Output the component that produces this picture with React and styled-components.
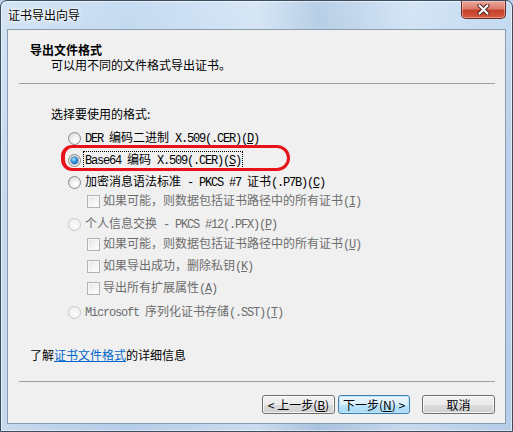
import React from 'react';
import styled, { createGlobalStyle } from 'styled-components';

const GlobalStyle = createGlobalStyle`
  html, body {
    margin: 0;
    padding: 0;
    background: #b9d1ea;
  }
  body {
    font-family: "Noto Sans CJK SC", "Liberation Sans", sans-serif;
    font-size: 12px;
    color: #000;
  }
`;

const Window = styled.div`
  width: 513px;
  height: 432px;
  box-sizing: border-box;
  display: flex;
  flex-direction: column;
  border: 1px solid #3d4d60;
  border-radius: 7px 7px 0 0;
  overflow: hidden;
  background:
    linear-gradient(90deg, rgba(255, 255, 255, 0.25) 0%, rgba(255, 255, 255, 0) 25%, rgba(255, 255, 255, 0.3) 50%, rgba(90, 120, 150, 0.12) 62%, rgba(255, 255, 255, 0.25) 80%, rgba(255, 255, 255, 0) 100%),
    linear-gradient(#c6dcf2, #b7cfe9 40%, #b4cde8);
  box-shadow: inset 0 0 0 1px rgba(255, 255, 255, 0.55);
`;

const TitleBar = styled.div`
  height: 28px;
  flex: none;
  display: flex;
  justify-content: space-between;
  align-items: flex-start;
  padding-left: 7px;
`;

const Title = styled.span`
  margin-top: 6px;
  line-height: 16px;
  text-shadow: 0 0 6px #fff, 0 0 3px #fff, 0 0 2px #fff;
`;

const CloseButton = styled.div`
  width: 45px;
  height: 18px;
  box-sizing: border-box;
  margin-right: 6px;
  display: flex;
  align-items: center;
  justify-content: center;
  border: 1px solid #6b2a22;
  border-top: none;
  border-radius: 0 0 5px 5px;
  background: linear-gradient(#e8a89d 0%, #dc7b6c 45%, #c63f2b 55%, #d65a3f 100%);
  box-shadow: inset 0 0 0 1px rgba(255, 220, 210, 0.45);
`;

const Client = styled.div`
  flex: 1;
  margin: 0 6px 7px;
  border: 1px solid #8b9cb0;
  background: #f0f0f0;
  display: flex;
  flex-direction: column;
`;

const Header = styled.div`
  padding: 12px 0 0 22px;
`;

const HeaderTitle = styled.div`
  font-weight: bold;
  line-height: 15px;
`;

const HeaderSub = styled.div`
  margin-left: 21px;
  line-height: 16px;
`;

const Separator = styled.div`
  height: 1px;
  margin: ${(p) => p.$top}px 10px 0 11px;
  background: #a0a0a0;
`;

const Body = styled.div`
  padding-left: 43px;
`;

const Prompt = styled.div`
  margin-top: 22px;
  line-height: 16px;
`;

const OptionList = styled.div`
  margin-top: 8px;
  padding-left: 17px;
  display: flex;
  flex-direction: column;
`;

const Row = styled.div`
  position: relative;
  height: 16px;
  margin-top: ${(p) => p.$mt}px;
  padding-left: ${(p) => (p.$check ? 19 : 0)}px;
  display: flex;
  align-items: center;
  color: ${(p) => (p.$disabled ? '#6d6d6d' : '#000')};
  white-space: nowrap;
`;

const Radio = styled.span`
  position: relative;
  flex: none;
  width: 13px;
  height: 13px;
  box-sizing: border-box;
  border-radius: 50%;
  margin-right: 3px;
  border: 1px solid ${(p) => (p.$disabled ? '#c6c6c6' : '#8a8b8b')};
  background: ${(p) =>
    p.$disabled
      ? 'radial-gradient(circle at 60% 65%, #fbfbfb 0%, #ededed 100%)'
      : 'radial-gradient(circle at 62% 68%, #ffffff 0%, #f1f1f1 40%, #cfcfcf 100%)'};
  &::after {
    content: '';
    display: ${(p) => (p.$checked ? 'block' : 'none')};
    position: absolute;
    left: 2px;
    top: 2px;
    width: 7px;
    height: 7px;
    border-radius: 50%;
    background: radial-gradient(circle at 40% 35%, #b5e6ff 0%, #2f97e0 40%, #0d4f97 100%);
    box-shadow: 0 0 0 0.5px #2a5f8e;
  }
`;

const Checkbox = styled.span`
  flex: none;
  width: 13px;
  height: 13px;
  box-sizing: border-box;
  margin-right: 2px;
  border: 1px solid #b3b3b3;
  background: linear-gradient(135deg, #e2e2e2 0%, #f3f3f3 50%, #ffffff 100%);
  box-shadow: inset 0 0 0 1px #f7f7f7;
`;

const Label = styled.span`
  line-height: 14px;
  padding: 0 1px;
  margin-left: -1px;
  border: 1px ${(p) => (p.$focus ? 'dotted #000' : 'solid transparent')};
`;

const Lat = styled.span`
  font-family: "Liberation Mono", "DejaVu Sans Mono", monospace;
  font-size: 12px;
  letter-spacing: -1.2px;
`;

const Annotation = styled.div`
  position: absolute;
  left: -7px;
  top: -7px;
  width: 229px;
  height: 26px;
  box-sizing: border-box;
  border: 3px solid #e8121a;
  border-left-width: 4px;
  border-radius: 12px 14px 14px 12px;
  pointer-events: none;
`;

const Footer = styled.div`
  margin-top: auto;
`;

const LinkLine = styled.div`
  padding-left: 22px;
  line-height: 16px;
`;

const Link = styled.span`
  color: #0066cc;
  text-decoration: underline;
`;

const Buttons = styled.div`
  margin-top: 13px;
  padding: 0 10px 9px 0;
  display: flex;
  justify-content: flex-end;
`;

const Button = styled.div`
  box-sizing: border-box;
  width: ${(p) => p.$w}px;
  height: 19px;
  margin-left: ${(p) => p.$ml}px;
  display: flex;
  align-items: center;
  justify-content: center;
  line-height: 17px;
  border: 1px solid ${(p) => (p.$default ? '#3c7fb1' : '#707070')};
  border-radius: 3px;
  background: ${(p) =>
    p.$default
      ? 'linear-gradient(#eaf6fd 0%, #d9f0fc 50%, #bee6fd 50%, #a7d9f5 100%)'
      : 'linear-gradient(#f2f2f2 0%, #ebebeb 50%, #dddddd 50%, #cfcfcf 100%)'};
  box-shadow: inset 0 0 0 1px ${(p) => (p.$default ? 'rgba(190, 230, 253, 0.9)' : 'rgba(255, 255, 255, 0.7)')};
  white-space: pre;
`;

const options = [
  {
    type: 'radio',
    mt: 0,
    label: (
      <>
        <Lat>DER </Lat>编码二进制<Lat> X.509(.CER)(<u>D</u>)</Lat>
      </>
    ),
  },
  {
    type: 'radio',
    mt: 6,
    checked: true,
    label: (
      <>
        <Lat>Base64 </Lat>编码<Lat> X.509(.CER)(<u>S</u>)</Lat>
      </>
    ),
  },
  {
    type: 'radio',
    mt: 6,
    label: (
      <>
        加密消息语法标准<Lat> - PKCS #7 </Lat>证书<Lat>(.P7B)(<u>C</u>)</Lat>
      </>
    ),
  },
  {
    type: 'check',
    mt: 3,
    label: (
      <>
        如果可能，则数据包括证书路径中的所有证书<Lat>(<u>I</u>)</Lat>
      </>
    ),
  },
  {
    type: 'radio',
    mt: 7,
    disabled: true,
    label: (
      <>
        个人信息交换<Lat> - PKCS #12(.PFX)(<u>P</u>)</Lat>
      </>
    ),
  },
  {
    type: 'check',
    mt: 4,
    label: (
      <>
        如果可能，则数据包括证书路径中的所有证书<Lat>(<u>U</u>)</Lat>
      </>
    ),
  },
  {
    type: 'check',
    mt: 6,
    label: (
      <>
        如果导出成功，删除私钥<Lat>(<u>K</u>)</Lat>
      </>
    ),
  },
  {
    type: 'check',
    mt: 6,
    label: (
      <>
        导出所有扩展属性<Lat>(<u>A</u>)</Lat>
      </>
    ),
  },
  {
    type: 'radio',
    mt: 8,
    disabled: true,
    label: (
      <>
        <Lat>Microsoft </Lat>序列化证书存储<Lat>(.SST)(<u>T</u>)</Lat>
      </>
    ),
  },
];

const CloseIcon = () => (
  <svg width="13" height="11" viewBox="0 0 13 11">
    <path d="M2.5 1.5 L10.5 9.5 M10.5 1.5 L2.5 9.5" stroke="#4a1a14" strokeWidth="4" strokeLinecap="round" />
    <path d="M2.5 1.5 L10.5 9.5 M10.5 1.5 L2.5 9.5" stroke="#ffffff" strokeWidth="2.2" strokeLinecap="round" />
  </svg>
);

const App = () => {
  return (
    <>
      <GlobalStyle />
      <Window>
        <TitleBar>
          <Title>证书导出向导</Title>
          <CloseButton>
            <CloseIcon />
          </CloseButton>
        </TitleBar>
        <Client>
          <Header>
            <HeaderTitle>导出文件格式</HeaderTitle>
            <HeaderSub>可以用不同的文件格式导出证书。</HeaderSub>
          </Header>
          <Separator $top={10} />
          <Body>
            <Prompt>选择要使用的格式:</Prompt>
            <OptionList>
              {options.map((o, i) => {
                const disabled = o.disabled || o.type === 'check';
                return (
                  <Row key={i} $mt={o.mt} $check={o.type === 'check'} $disabled={disabled}>
                    {o.type === 'radio' ? (
                      <Radio $checked={o.checked} $disabled={o.disabled} />
                    ) : (
                      <Checkbox />
                    )}
                    <Label $focus={o.checked}>{o.label}</Label>
                    {o.checked && <Annotation />}
                  </Row>
                );
              })}
            </OptionList>
          </Body>
          <Footer>
            <LinkLine>
              了解<Link>证书文件格式</Link>的详细信息
            </LinkLine>
            <Separator $top={18} />
            <Buttons>
              <Button $w={73} $ml={0}>
                {'< 上一步('}<u>B</u>{')'}
              </Button>
              <Button $w={72} $ml={3} $default>
                {'下一步('}<u>N</u>{') >'}
              </Button>
              <Button $w={73} $ml={12}>
                取消
              </Button>
            </Buttons>
          </Footer>
        </Client>
      </Window>
    </>
  );
};

export default App;
